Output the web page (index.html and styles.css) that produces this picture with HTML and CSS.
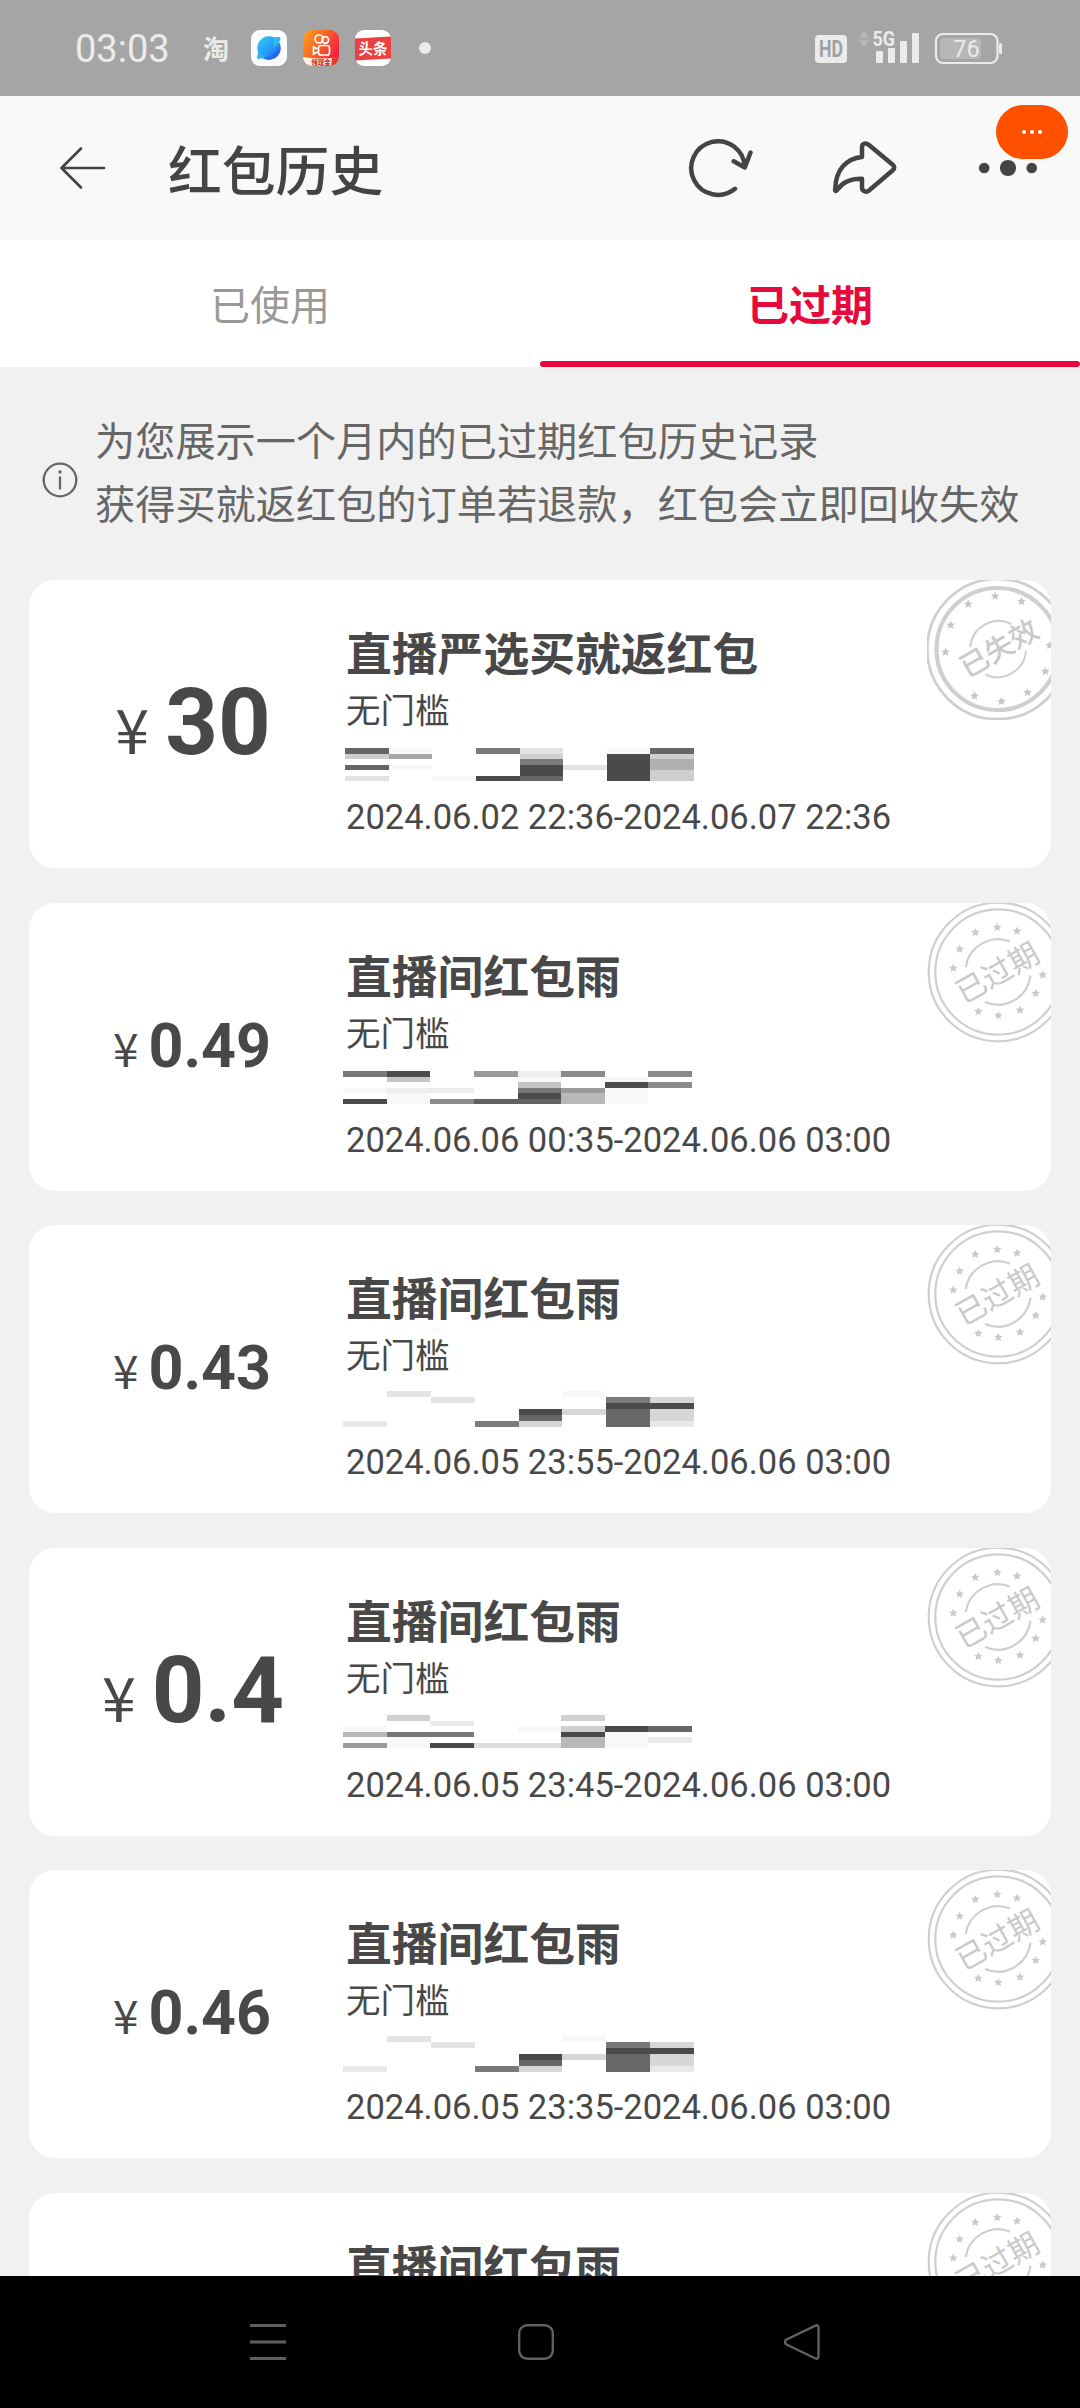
FILE: index.html
```html
<!DOCTYPE html>
<html lang="zh-CN">
<head>
<meta charset="utf-8">
<title>红包历史</title>
<link rel="stylesheet" href="styles.css">
</head>
<body>
<svg class="defs" width="0" height="0">
  <defs>
    <path id="star" d="M0-4.400 1.300-1.500 4.300-1.300 2.100.8 2.700 3.800 0 2.300-2.700 3.800-2.100.8-4.300-1.300-1.300-1.500Z"/>
    <symbol id="stamp-expired" viewBox="0 0 142 142">
      <g transform="translate(71 71)" fill="none" stroke="#cfcfcf" stroke-width="2.200">
        <circle r="69.3"/><circle r="62.7"/>
        <path d="M-32.3-5A32.7 32.7 0 0 1 12-30.5M-13 29.9A32.7 32.7 0 0 0 32.5 3.7"/>
        <g fill="#cacaca" stroke="none">
          <use href="#star" x="-22.7" y="-39.7"/><use href="#star" x="-.7" y="-44.7"/><use href="#star" x="19" y="-41"/><use href="#star" x="-38.3" y="-23"/><use href="#star" x="-44.7" y="-4"/><use href="#star" x="44.7" y="2.7"/><use href="#star" x="37.7" y="21.3"/><use href="#star" x="22" y="38"/><use href="#star" x=".3" y="43.3"/><use href="#star" x="-19.7" y="39.3"/>
        </g>
        <text class="stamp-text" x="0" y="10.5" transform="translate(-.5 1) rotate(-29.5)">已过期</text>
      </g>
    </symbol>
    <symbol id="stamp-invalid" viewBox="0 0 142 142">
      <g transform="translate(70.500 71)" fill="none" stroke="#cfcfcf">
        <circle r="70.200" stroke-width="2.800"/><circle r="61" stroke-width="4.200"/>
        <path stroke-width="2" d="M-27.3-2A28.5 28.5 0 0 1 14-25M-12 25.5A28.5 28.5 0 0 0 28.5 1.5"/>
        <g fill="#c6c6c6" stroke="none">
          <use href="#star" x="-29.3" y="-45"/><use href="#star" x="-2.4" y="-53"/><use href="#star" x="24" y="-47.7"/><use href="#star" x="-46.8" y="-24"/><use href="#star" x="-52" y="3"/><use href="#star" x="-23" y="46.7"/><use href="#star" x="4" y="52.3"/><use href="#star" x="30" y="43.3"/><use href="#star" x="47.9" y="22.3"/><use href="#star" x="52.3" y="-3.7"/>
        </g>
        <text class="stamp-text stamp-text-bold" x="0" y="10.5" transform="translate(1.500 -1) rotate(-30)">已失效</text>
      </g>
    </symbol>
    <symbol id="mask-a" viewBox="0 0 8 6" preserveAspectRatio="none">
      <path fill="#e4e4e4" d="M1 0h1v1h-1zM2 1h1v1h-1z"/>
      <path fill="#f8f8f8" d="M5 0h1v1h-1z"/>
      <path fill="#7a7a7a" d="M6 1h1v1h-1zM3 5h1v1h-1z"/>
      <path fill="#d6d6d6" d="M7 1h1v1h-1zM5 3h1v1h-1zM7 3h1v2h-1zM4 5h1v1h-1z"/>
      <path fill="#4a4a4a" d="M6 2h2v1h-2zM4 3h1v1h-1z"/>
      <path fill="#686868" d="M6 3h1v3h-1zM4 4h1v1h-1z"/>
      <path fill="#e9e9e9" d="M0 5h1v1h-1zM7 5h1v1h-1z"/>
    </symbol>
  </defs>
</svg>

<div class="screen">
  <header class="status">
    <span class="clock">03:03</span>
    <span class="tao">淘</span>
    <svg class="app" viewBox="0 0 36 36">
      <defs><linearGradient id="planet" x1="0" y1="0" x2="1" y2="1"><stop offset="0" stop-color="#36cdf5"/><stop offset=".55" stop-color="#249af5"/><stop offset="1" stop-color="#2558dd"/></linearGradient></defs>
      <rect width="36" height="36" rx="9" fill="#fbfbfb"/>
      <circle cx="18" cy="18" r="11.7" fill="url(#planet)"/>
      <path d="M29 16C24 24 17 28 11 28 18 32 29 29 29.600 18Z" fill="#2565e8" opacity=".75"/>
      <path d="M22 7c4 1 7-1 7.500 1 .5 3-4 8-7 10ZM7.500 22c-1 3-2 6-.5 7 2 0 5-1 7-2Z" fill="#2db7f3"/>
    </svg>
    <svg class="app" viewBox="0 0 36 36">
      <defs><linearGradient id="video" x1="0" y1="0" x2="1" y2=".6"><stop offset="0" stop-color="#ffa51f"/><stop offset=".5" stop-color="#fb6424"/><stop offset="1" stop-color="#f51e43"/></linearGradient><clipPath id="round"><rect width="36" height="36" rx="9"/></clipPath></defs>
      <g clip-path="url(#round)">
        <rect width="36" height="36" fill="url(#video)"/>
        <g fill="none" stroke="#fff" stroke-width="1.7"><circle cx="16" cy="9" r="4"/><circle cx="22.3" cy="10" r="3.3"/><rect x="15.5" y="15.5" width="11" height="9.500" rx="2.5"/><path d="M14.5 19 10.5 17v7l4-2"/></g>
        <path d="M0 27q18 3 36 0v9H0Z" fill="#fff2e6"/><path d="M29 28l7-2v10h-8Z" fill="#e63b2a"/>
        <text x="18" y="34.500" text-anchor="middle" class="app-tag">领现金</text>
      </g>
    </svg>
    <svg class="app" viewBox="0 0 36 36">
      <rect width="36" height="36" rx="9" fill="#fff"/><path d="M0 8.500 36 6.500v22L0 30.500Z" fill="#ea4040"/>
      <text x="18" y="23.500" text-anchor="middle" class="app-news">头条</text>
    </svg>
    <i class="more-dot"></i>
    <svg class="system" width="190" height="36" viewBox="815 30 190 36" fill="#ebebeb">
      <rect x="815" y="35" width="32" height="28" rx="4"/>
      <text x="831" y="57.200" text-anchor="middle" class="hd" textLength="24" lengthAdjust="spacingAndGlyphs">HD</text>
      <path d="M858.500 37.500 864 31.500 869.500 37.500ZM858.500 40.500h11L864 46.500Z" fill="#b7b7b7"/>
      <text x="872.500" y="46" class="five-g" textLength="22.500" lengthAdjust="spacingAndGlyphs">5G</text>
      <rect x="876" y="51" width="7" height="12" rx="1"/><rect x="888" y="48" width="7" height="15" rx="1"/><rect x="900" y="41" width="7" height="22" rx="1"/><rect x="912" y="33" width="7" height="30" rx="1"/>
      <rect x="936" y="34" width="61.500" height="29" rx="7" fill="none" stroke="#ebebeb" stroke-width="2.200"/>
      <rect x="940" y="38" width="41" height="21" rx="4" fill="#b7b7b7"/><rect x="999" y="43" width="3" height="11" rx="1.500"/>
      <text x="966.500" y="57" text-anchor="middle" class="battery">76</text>
    </svg>
  </header>

  <nav class="bar">
    <svg class="back" width="48" height="46" viewBox="58 145 48 46"><path d="M104 168H61.500M81 148.500 61.500 168 81 187.500" fill="none" stroke="#444" stroke-width="2.700" stroke-linecap="round" stroke-linejoin="round"/></svg>
    <h1>红包历史</h1>
    <svg class="tools" width="380" height="60" viewBox="686 138 380 60" fill="none" stroke="#444" stroke-width="4.500" stroke-linecap="round" stroke-linejoin="round">
      <path d="M735 188.800A26.800 26.800 0 1 1 744.800 167M733.700 161.300 744.800 167.500 750.500 152.500"/>
      <path d="M835.300 188C836 170 846 158.500 862 157V147.500C862 143 866 142.500 869 145L892.500 164.500Q896 167.500 892.500 170.500L869 190.500C866 193 862 191 862 187.500V178.800C849 178.500 842 183 837.500 189.500 836 191.800 834.500 191 835.300 188Z"/>
      <g fill="#444" stroke="none"><circle cx="984.200" cy="168" r="5.300"/><circle cx="1008" cy="168" r="8.100"/><circle cx="1031.700" cy="168" r="5.300"/></g>
    </svg>
    <span class="badge"><i></i><i></i><i></i></span>
  </nav>

  <div class="tabs">
    <div class="tab">已使用</div>
    <div class="tab active">已过期</div>
  </div>

  <main class="content">
    <div class="notice">
      <svg width="36" height="36" viewBox="0 0 36 36" fill="none" stroke="#666" stroke-width="2.300"><circle cx="18" cy="18" r="16.300"/><path d="M18 14.500V27.500"/><circle cx="18" cy="10" r="1.700" fill="#666" stroke="none"/></svg>
      <p>为您展示一个月内的已过期红包历史记录<br>获得买就返红包的订单若退款，红包会立即回收失效</p>
    </div>

    <section class="card">
      <div class="amount large"><span class="yen">¥</span><b>30</b></div>
      <div class="info">
        <h2>直播严选买就返红包</h2>
        <p class="rule">无门槛</p>
        <svg class="mask m1" viewBox="0 0 8 6" preserveAspectRatio="none">
          <path fill="#666" d="M0 0h1v1h-1zM0 3h1v1h-1zM7 0h1v1h-1zM4 5h1v1h-1z"/>
          <path fill="#7a7a7a" d="M3 0h1v1h-1zM4 2h1v1h-1z"/>
          <path fill="#e2e2e2" d="M4 0h1v1h-1zM5 3h1v1h-1zM0 5h1v1h-1z"/>
          <path fill="#f8f8f8" d="M1 3h1v1h-1zM6 0h1v1h-1zM2 5h1v1h-1zM1 0h1v1h-1z"/>
          <path fill="#cecece" d="M0 1h1v1h-1zM4 1h1v1h-1zM7 1h1v1h-1zM7 4h1v2h-1z"/>
          <path fill="#a6a6a6" d="M1 1h1v1h-1z"/><path fill="#b0b0b0" d="M7 2h1v2h-1z"/>
          <path fill="#4a4a4a" d="M4 3h1v2h-1zM3 5h1v1h-1zM6 1h1v5h-1z"/>
        </svg>
        <p class="date">2024.06.02 22:36-2024.06.07 22:36</p>
      </div>
      <svg class="stamp"><use href="#stamp-invalid"/></svg>
    </section>

    <section class="card">
      <div class="amount"><span class="yen">¥</span><b>0.49</b></div>
      <div class="info">
        <h2>直播间红包雨</h2>
        <p class="rule">无门槛</p>
        <svg class="mask m2" viewBox="0 0 8 6" preserveAspectRatio="none">
          <path fill="#f8f8f8" d="M6 1h1v1h-1zM4 1h1v1h-1zM0 3h1v1h-1zM6 3h1v3h-1zM1 4h1v2h-1z"/>
          <path fill="#777" d="M0 0h1v1h-1zM4 3h1v1h-1z"/>
          <path fill="#4c4c4c" d="M1 0h1v1h-1zM6 2h1v1h-1zM4 4h1v1h-1zM0 5h1v1h-1z"/>
          <path fill="#9a9a9a" d="M3 0h1v1h-1zM5 3h1v1h-1z"/>
          <path fill="#ededed" d="M4 0h1v1h-1zM1 3h2v1h-2z"/>
          <path fill="#8a8a8a" d="M5 0h1v1h-1zM7 0h1v1h-1zM7 2h1v1h-1zM2 5h1v1h-1z"/>
          <path fill="#c5c5c5" d="M1 1h1v1h-1zM4 2h1v1h-1z"/>
          <path fill="#b8b8b8" d="M5 4h1v2h-1z"/><path fill="#616161" d="M3 5h2v1h-2z"/>
        </svg>
        <p class="date">2024.06.06 00:35-2024.06.06 03:00</p>
      </div>
      <svg class="stamp"><use href="#stamp-expired"/></svg>
    </section>

    <section class="card">
      <div class="amount"><span class="yen">¥</span><b>0.43</b></div>
      <div class="info">
        <h2>直播间红包雨</h2>
        <p class="rule">无门槛</p>
        <svg class="mask m3"><use href="#mask-a"/></svg>
        <p class="date">2024.06.05 23:55-2024.06.06 03:00</p>
      </div>
      <svg class="stamp"><use href="#stamp-expired"/></svg>
    </section>

    <section class="card">
      <div class="amount large"><span class="yen">¥</span><b>0.4</b></div>
      <div class="info">
        <h2>直播间红包雨</h2>
        <p class="rule">无门槛</p>
        <svg class="mask m4" viewBox="0 0 8 6" preserveAspectRatio="none">
          <path fill="#d0d0d0" d="M1 0h1v1h-1zM5 0h1v1h-1zM5 2h1v1h-1z"/>
          <path fill="#eaeaea" d="M2 1h1v1h-1zM7 4h1v1h-1z"/>
          <path fill="#f8f8f8" d="M0 2h1v1h-1zM4 2h1v1h-1zM6 3h1v3h-1zM1 4h1v2h-1z"/>
          <path fill="#4a4a4a" d="M6 2h1v1h-1zM5 3h1v1h-1zM2 5h1v1h-1z"/>
          <path fill="#666" d="M7 2h1v1h-1z"/><path fill="#787878" d="M1 3h2v1h-2z"/>
          <path fill="#b8b8b8" d="M0 3h1v1h-1zM5 4h1v2h-1z"/>
          <path fill="#9a9a9a" d="M0 5h1v1h-1z"/><path fill="#ddd" d="M3 5h2v1h-2z"/>
        </svg>
        <p class="date">2024.06.05 23:45-2024.06.06 03:00</p>
      </div>
      <svg class="stamp"><use href="#stamp-expired"/></svg>
    </section>

    <section class="card">
      <div class="amount"><span class="yen">¥</span><b>0.46</b></div>
      <div class="info">
        <h2>直播间红包雨</h2>
        <p class="rule">无门槛</p>
        <svg class="mask m3"><use href="#mask-a"/></svg>
        <p class="date">2024.06.05 23:35-2024.06.06 03:00</p>
      </div>
      <svg class="stamp"><use href="#stamp-expired"/></svg>
    </section>

    <section class="card">
      <div class="amount"></div>
      <div class="info"><h2>直播间红包雨</h2></div>
      <svg class="stamp"><use href="#stamp-expired"/></svg>
    </section>
  </main>

  <footer class="keys">
    <svg viewBox="0 0 36 36"><path d="M0 1.500H36M0 18H36M0 34.500H36" stroke-width="3"/></svg>
    <svg viewBox="0 0 36 36"><rect x="1.200" y="1.200" width="33.600" height="33.600" rx="8"/></svg>
    <svg viewBox="0 0 36 36"><path d="M31 1.800 2.500 15.500Q-.5 18 2.500 20.500L31 34.200Q34.500 36 34.500 32V4Q34.500 0 31 1.800Z"/></svg>
  </footer>
</div>
</body>
</html>
```

FILE: styles.css
```css
* { box-sizing: border-box; margin: 0; padding: 0; }
body {
  width: 1080px;
  background: #f1f1f1;
  color: #484848;
  font-family: "Noto Sans CJK SC", "Noto Sans", sans-serif;
}
.defs { display: block; height: 0; }
.screen { height: 2408px; display: flex; flex-direction: column; overflow: hidden; }

.status {
  flex: none;
  height: 96px;
  padding: 0 78px 0 75px;
  display: flex;
  align-items: center;
  background: #a5a5a5;
  color: #ebebeb;
}
.clock { width: 128px; font: 400 38px/96px Roboto, sans-serif; padding-top: 2px; }
.tao { width: 48px; font-size: 26px; line-height: 60px; font-weight: 700; }
.app { width: 36px; height: 36px; margin-right: 16px; flex: none; }
.app-tag { font-size: 6.5px; font-weight: 900; fill: #d8301e; }
.app-news { font-size: 14.5px; font-weight: 700; fill: #fff; }
.more-dot { width: 12px; height: 12px; margin-left: 12px; border-radius: 50%; background: #ebebeb; }
.system { margin-left: auto; flex: none; margin-right: -3px; }
.hd { font: 700 23px Roboto, sans-serif; fill: #a0a0a0; }
.five-g { font: 700 20px Roboto, sans-serif; }
.battery { font: 400 23.5px Roboto, sans-serif; }

.bar {
  position: relative;
  flex: none;
  height: 144px;
  padding-left: 58px;
  display: flex;
  align-items: center;
  background: #f9f9f9;
  color: #444;
}
.back { margin-right: 62px; }
.bar h1 { width: 518px; font-size: 53.8px; line-height: 144px; font-weight: 500; }
.badge {
  position: absolute;
  left: 996px;
  top: 9px;
  width: 72px;
  height: 54px;
  border-radius: 27px;
  background: #ff5000;
  display: flex;
  justify-content: center;
  align-items: center;
  gap: 4px;
}
.badge i { width: 4px; height: 4px; border-radius: 50%; background: #fff; }

.tabs { flex: none; height: 127px; display: flex; background: #fff; }
.tab {
  position: relative;
  flex: 1;
  text-align: center;
  font-size: 40px;
  line-height: 126px;
  color: #999;
}
.tab.active { font-size: 42px; font-weight: 700; color: #e60a3c; }
.tab.active::after {
  content: "";
  position: absolute;
  left: 0;
  right: 0;
  bottom: 0;
  height: 6px;
  border-radius: 3px;
  background: #e60a3c;
}

.content { flex: 1; min-height: 0; overflow: hidden; padding: 0 29px; }
.notice {
  height: 213px;
  padding: 40px 0 0 13px;
  display: flex;
  align-items: flex-start;
  color: #666;
}
.notice svg { margin-top: 55px; flex: none; }
.notice p { margin-left: 17px; font-size: 40.2px; line-height: 63px; white-space: nowrap; }

.card {
  position: relative;
  height: 288px;
  margin-bottom: 34.5px;
  border-radius: 26px;
  overflow: hidden;
  background: #fff;
  display: flex;
}
.amount {
  width: 317px;
  padding-left: 9px;
  display: flex;
  justify-content: center;
  align-items: baseline;
  padding-top: 107px;
}
.amount b { font: 700 61px/72px Roboto, sans-serif; }
.amount .yen { font-size: 46px; line-height: 46px; font-weight: 400; margin-right: 10px; }
.amount.large { padding-top: 89px; padding-left: 11px; }
.amount.large b { font-size: 92px; line-height: 108px; }
.amount.large .yen { font-size: 61px; line-height: 61px; margin-right: 16px; }
.info { padding-top: 37px; white-space: nowrap; }
.info h2 { font-size: 45.8px; line-height: 68px; font-weight: 700; }
.rule { font-size: 34.5px; line-height: 46px; height: 63px; }
.mask { display: block; height: 33px; margin-bottom: 16px; shape-rendering: crispEdges; }
.m1 { width: 349px; margin-left: -1px; }
.m2 { width: 349px; margin-left: -3px; }
.m3 { width: 351px; height: 36px; margin: -2px 0 15px -3px; }
.m4 { width: 349px; margin: -1px 0 17px -3px; }
.date { font: 400 34.5px/41px Roboto, sans-serif; }
.stamp { position: absolute; left: 898px; top: -2px; width: 142px; height: 142px; }
.stamp-text {
  font-size: 30px;
  font-weight: 400;
  text-anchor: middle;
  fill: #c9c9c9;
  stroke: none;
}
.stamp-text-bold { font-size: 28.5px; font-weight: 500; }

.keys {
  flex: none;
  height: 132px;
  padding-left: 250px;
  display: flex;
  align-items: center;
  gap: 232px;
  background: #000;
}
.keys svg { width: 36px; height: 36px; fill: none; stroke: #606060; stroke-width: 2.4; }
.keys svg:last-child { margin-left: -2px; }
```
